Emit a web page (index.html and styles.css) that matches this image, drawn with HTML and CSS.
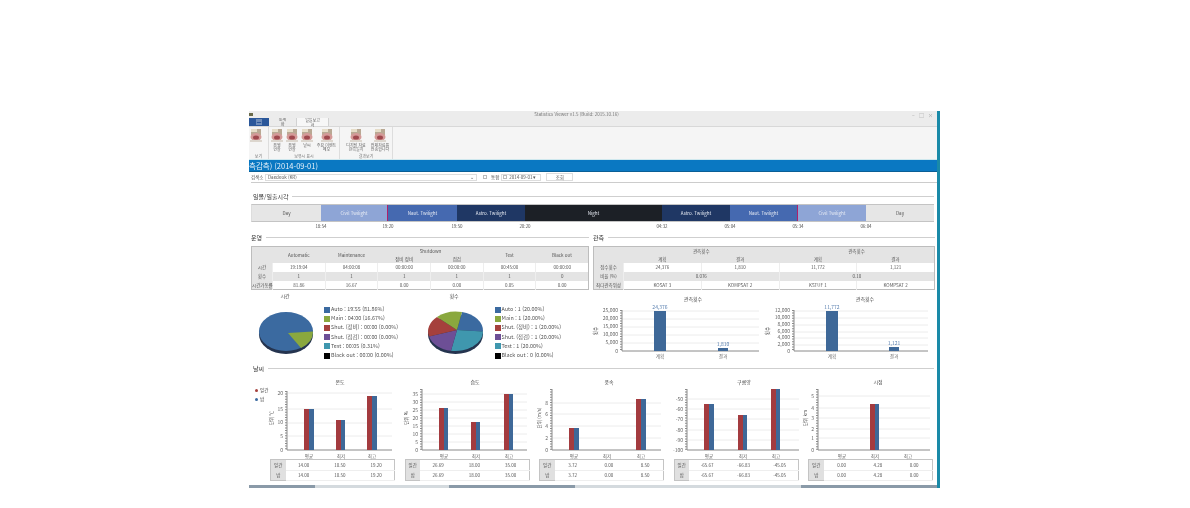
FILE: index.html
```html
<!DOCTYPE html>
<html lang="ko">
<head>
    <meta charset="UTF-8">
    <title>Statistics Viewer</title>
    <link rel="stylesheet" href="styles.css">
</head>
<body>
    <svg class="defs" width="0" height="0">
        <symbol id="ribbonIcon" viewBox="0 0 12 13">
            <rect x="1" y="0" width="10" height="6" fill="#b9a994"/>
            <rect x="1" y="0" width="6" height="3" fill="#e6ddc8"/>
            <ellipse cx="6" cy="8" rx="5.5" ry="4" fill="#d49a98"/>
            <ellipse cx="6" cy="8.5" rx="3" ry="2" fill="#a0484e"/>
            <rect x="0" y="11" width="12" height="2" fill="#dcd6ce"/>
        </symbol>
    </svg>

    <div class="window">
        <div class="titleBar">
            <span class="appIcon"></span>
            <span class="appTitle">Statistics Viewer v1.5 (Build: 2015.10.16)</span>
            <span class="winButtons">&ndash; &#9633; &times;</span>
        </div>
        <div class="tabRow">
            <div class="fileTab">&#9636;</div>
            <div class="tab">통계<br>화</div>
            <div class="tab active">일일보고<br>서</div>
        </div>
        <div class="ribbon">
            <div class="ribbonGroup groupA">
                <div class="ribbonItems">
                    <div class="ribbonItem"><svg class="icon"><use href="#ribbonIcon"/></svg></div>
                </div>
                <div class="groupLabel">보기</div>
            </div>
            <div class="ribbonGroup groupB">
                <div class="ribbonItems">
                    <div class="ribbonItem"><svg class="icon"><use href="#ribbonIcon"/></svg>운영<br>현황</div>
                    <div class="ribbonItem"><svg class="icon"><use href="#ribbonIcon"/></svg>운영<br>현황</div>
                    <div class="ribbonItem"><svg class="icon"><use href="#ribbonIcon"/></svg>날씨</div>
                    <div class="ribbonItem wide"><svg class="icon"><use href="#ribbonIcon"/></svg>주요 이벤트<br>메모</div>
                </div>
                <div class="groupLabel">보유시 표시</div>
            </div>
            <div class="ribbonGroup groupC">
                <div class="ribbonItems">
                    <div class="ribbonItem wide"><svg class="icon"><use href="#ribbonIcon"/></svg>디지털 자료<br>관측일지</div>
                    <div class="ribbonItem wide"><svg class="icon"><use href="#ribbonIcon"/></svg>전체자료를<br>전송합니다</div>
                </div>
                <div class="groupLabel">결과보기</div>
            </div>
        </div>
        <div class="blueBar">측감측) (2014-09-01)</div>

        <div class="content">
            <div class="toolRow">
                <span class="toolLabel">검색소 :</span>
                <div class="comboBox"><span>Daedeok (KR)</span><span>&#8964;</span></div>
                <span class="checkItem"><span class="checkBox"></span>통합</span>
                <div class="dateBox"><span class="checkBox"></span>2014-09-01 &#9662;</div>
                <div class="toolButton">조회</div>
            </div>

            <div class="sectionHead first"><span>일몰/일출시각</span></div>
            <div class="band">
                <div class="seg day">Day</div>
                <div class="seg civil redRight">Civil Twilight</div>
                <div class="seg naut">Naut. Twilight</div>
                <div class="seg astro">Astro. Twilight</div>
                <div class="seg night">Night</div>
                <div class="seg astro">Astro. Twilight</div>
                <div class="seg naut redRight">Naut. Twilight</div>
                <div class="seg civil">Civil Twilight</div>
                <div class="seg day">Day</div>
            </div>
            <div class="band ticks">
                <div></div>
                <div><span>18:54</span></div>
                <div><span>19:20</span></div>
                <div><span>19:50</span></div>
                <div><span>20:20</span></div>
                <div><span>04:32</span></div>
                <div><span>05:04</span></div>
                <div><span>05:34</span></div>
                <div><span>06:04</span></div>
            </div>

            <div class="twoCols">
                <div class="colLeft">
                    <div class="sectionHead"><span>운영</span></div>
                    <table class="dataTable opsTable">
                        <colgroup><col class="opsLabelCol"><col span="6"></colgroup>
                        <tr class="head">
                            <th rowspan="2"></th>
                            <th rowspan="2">Automatic</th>
                            <th rowspan="2">Maintenance</th>
                            <th colspan="2">Shutdown</th>
                            <th rowspan="2">Test</th>
                            <th rowspan="2">Black out</th>
                        </tr>
                        <tr class="head"><th>장비 정비</th><th>점검</th></tr>
                        <tr><th>시간</th><td>19:19:04</td><td>04:00:08</td><td>00:00:00</td><td>00:00:00</td><td>00:45:00</td><td>00:00:00</td></tr>
                        <tr class="grey"><th>횟수</th><td>1</td><td>1</td><td>1</td><td>1</td><td>1</td><td>0</td></tr>
                        <tr><th>시간가동률</th><td>81.86</td><td>16.67</td><td>0.00</td><td>0.00</td><td>0.05</td><td>0.00</td></tr>
                    </table>
                    <div class="pieRow">
                        <svg class="pie pieA" viewBox="0 0 74 70">
                            <text class="chartTitle" x="35" y="5">시간</text>
                            <ellipse cx="36" cy="41.5" rx="27" ry="19.5" fill="#25344f"/>
                            <ellipse cx="36" cy="38.5" rx="27" ry="19.5" fill="#3b6aa0"/>
                            <path d="M38 40 L63 38.5 A27 19.5 0 0 1 51 55 Z" fill="#8aa83e"/>
                        </svg>
                        <ul class="legend">
                            <li><i class="cBlue"></i>Auto : 19:55 (81.86%)</li>
                            <li><i class="cGreen"></i>Main : 04:00 (16.67%)</li>
                            <li><i class="cRed"></i>Shut. (정비) : 00:00 (0.00%)</li>
                            <li><i class="cPurple"></i>Shut. (점검) : 00:00 (0.00%)</li>
                            <li><i class="cTeal"></i>Test : 00:05 (0.31%)</li>
                            <li><i class="cBlack"></i>Black out : 00:00 (0.00%)</li>
                        </ul>
                        <svg class="pie pieB" viewBox="0 0 74 70">
                            <text class="chartTitle" x="35" y="5">횟수</text>
                            <ellipse cx="36.5" cy="41.5" rx="27.5" ry="19.5" fill="#25344f"/>
                            <path d="M38 37 L43 19 A27.5 19.5 0 0 1 64 38.5 Z" fill="#3b6aa0"/>
                            <path d="M38 37 L64 38.5 A27.5 19.5 0 0 1 32 57.7 Z" fill="#3f97ae"/>
                            <path d="M38 37 L32 57.7 A27.5 19.5 0 0 1 10 43.5 Z" fill="#6d4f96"/>
                            <path d="M38 37 L10 43.5 A27.5 19.5 0 0 1 18 24 Z" fill="#a5403c"/>
                            <path d="M38 37 L18 24 A27.5 19.5 0 0 1 43 19 Z" fill="#8aa83e"/>
                        </svg>
                        <ul class="legend">
                            <li><i class="cBlue"></i>Auto : 1 (20.00%)</li>
                            <li><i class="cGreen"></i>Main : 1 (20.00%)</li>
                            <li><i class="cRed"></i>Shut. (정비) : 1 (20.00%)</li>
                            <li><i class="cPurple"></i>Shut. (점검) : 1 (20.00%)</li>
                            <li><i class="cTeal"></i>Test : 1 (20.00%)</li>
                            <li><i class="cBlack"></i>Black out : 0 (0.00%)</li>
                        </ul>
                    </div>
                </div>
                <div class="colRight">
                    <div class="sectionHead"><span>관측</span></div>
                    <table class="dataTable obsTable">
                        <colgroup><col class="obsLabelCol"><col span="4"></colgroup>
                        <tr class="head">
                            <th rowspan="2"></th>
                            <th colspan="2">관측횟수</th>
                            <th colspan="2">관측횟수</th>
                        </tr>
                        <tr class="head"><th>계획</th><th>결과</th><th>계획</th><th>결과</th></tr>
                        <tr><th>접수횟수</th><td>24,376</td><td>1,810</td><td>11,772</td><td>1,121</td></tr>
                        <tr class="grey"><th>비율 (%)</th><td colspan="2">0.076</td><td colspan="2">0.10</td></tr>
                        <tr><th>최다관측위성</th><td>KOSAT 3</td><td>KOMPSAT 2</td><td>KSTUF 1</td><td>KOMPSAT 2</td></tr>
                    </table>
                    <div class="obsCharts">
                        <svg class="obsChart" viewBox="0 0 172 66">
                            <text class="chartTitle" x="100" y="8">관측횟수</text>
                            <path class="grid" d="M29 18H166M29 26H166M29 34H166M29 42H166M29 50H166"/>
                            <path class="tickMarks" d="M28 17V58"/>
                            <path class="axis" d="M29 17V58H166"/>
                            <rect class="barBlue" x="61" y="18" width="12" height="40"/>
                            <rect class="barBlue" x="125" y="55" width="10" height="3"/>
                            <text class="valLbl" x="67" y="16">24,376</text>
                            <text class="valLbl" x="130" y="53">1,810</text>
                            <text class="yLbl" x="25" y="19">25,000</text>
                            <text class="yLbl" x="25" y="27">20,000</text>
                            <text class="yLbl" x="25" y="35">15,000</text>
                            <text class="yLbl" x="25" y="43">10,000</text>
                            <text class="yLbl" x="25" y="51">5,000</text>
                            <text class="yLbl" x="25" y="60">0</text>
                            <text class="yTitle" transform="translate(4 38) rotate(-90)">횟수</text>
                            <text class="xLbl" x="67" y="65">계획</text>
                            <text class="xLbl" x="130" y="65">결과</text>
                        </svg>
                        <svg class="obsChart" viewBox="0 0 172 66">
                            <text class="chartTitle" x="100" y="8">관측횟수</text>
                            <path class="grid" d="M29 18H163M29 25H163M29 32H163M29 39H163M29 45H163M29 52H163"/>
                            <path class="tickMarks" d="M28 17V58"/>
                            <path class="axis" d="M29 17V58H163"/>
                            <rect class="barBlue" x="61" y="18" width="12" height="40"/>
                            <rect class="barBlue" x="124" y="54" width="10" height="4"/>
                            <text class="valLbl" x="67" y="16">11,772</text>
                            <text class="valLbl" x="129" y="52">1,121</text>
                            <text class="yLbl" x="25" y="19">12,000</text>
                            <text class="yLbl" x="25" y="26">10,000</text>
                            <text class="yLbl" x="25" y="33">8,000</text>
                            <text class="yLbl" x="25" y="40">6,000</text>
                            <text class="yLbl" x="25" y="46">4,000</text>
                            <text class="yLbl" x="25" y="53">2,000</text>
                            <text class="yLbl" x="25" y="60">0</text>
                            <text class="yTitle" transform="translate(4 38) rotate(-90)">횟수</text>
                            <text class="xLbl" x="67" y="65">계획</text>
                            <text class="xLbl" x="129" y="65">결과</text>
                        </svg>
                    </div>
                </div>
            </div>

            <div class="sectionHead weatherHead"><span>날씨</span></div>
            <div class="weatherRow">
                <ul class="dayLegend">
                    <li><i class="cRed"></i>일간</li>
                    <li><i class="cBlue"></i>밤</li>
                </ul>

                <div class="weatherCell">
                    <svg class="weatherChart" viewBox="0 0 125 83">
                        <text class="chartTitle" x="70" y="8">온도</text>
                        <path class="grid" d="M18 17H122M18 33H122M18 47H122M18 60H122"/>
                        <path class="tickMarks" d="M16 15V74"/>
                        <path class="axis" d="M17 15V74H122"/>
                        <rect class="barRed" x="34" y="33" width="5" height="41"/><rect class="barBlue" x="39" y="33" width="5" height="41"/>
                        <rect class="barRed" x="66" y="44" width="5" height="30"/><rect class="barBlue" x="71" y="44" width="4" height="30"/>
                        <rect class="barRed" x="97" y="20" width="5" height="54"/><rect class="barBlue" x="102" y="20" width="5" height="54"/>
                        <text class="yLbl" x="13" y="19">20</text><text class="yLbl" x="13" y="35">15</text><text class="yLbl" x="13" y="48">10</text><text class="yLbl" x="13" y="62">5</text><text class="yLbl" x="13" y="76">0</text>
                        <text class="yTitle" transform="translate(3 42) rotate(-90)">단위 ℃</text>
                        <text class="xLbl" x="39" y="82">평균</text><text class="xLbl" x="71" y="82">최저</text><text class="xLbl" x="102" y="82">최고</text>
                    </svg>
                    <table class="weatherTable">
                        <tr><th>일간</th><td>14.00</td><td>10.50</td><td>19.20</td></tr>
                        <tr><th>밤</th><td>14.00</td><td>10.50</td><td>19.20</td></tr>
                    </table>
                </div>

                <div class="weatherCell">
                    <svg class="weatherChart" viewBox="0 0 125 83">
                        <text class="chartTitle" x="70" y="8">습도</text>
                        <path class="grid" d="M18 18H122M18 26H122M18 34H122M18 42H122M18 50H122M18 58H122M18 66H122"/>
                        <path class="tickMarks" d="M16 13V74"/>
                        <path class="axis" d="M17 13V74H122"/>
                        <rect class="barRed" x="34" y="32" width="5" height="42"/><rect class="barBlue" x="39" y="32" width="4" height="42"/>
                        <rect class="barRed" x="66" y="46" width="5" height="28"/><rect class="barBlue" x="71" y="46" width="4" height="28"/>
                        <rect class="barRed" x="99" y="18" width="5" height="56"/><rect class="barBlue" x="104" y="18" width="4" height="56"/>
                        <text class="yLbl" x="13" y="20">35</text><text class="yLbl" x="13" y="28">30</text><text class="yLbl" x="13" y="36">25</text><text class="yLbl" x="13" y="44">20</text><text class="yLbl" x="13" y="52">15</text><text class="yLbl" x="13" y="60">10</text><text class="yLbl" x="13" y="68">5</text><text class="yLbl" x="13" y="76">0</text>
                        <text class="yTitle" transform="translate(3 42) rotate(-90)">단위 %</text>
                        <text class="xLbl" x="39" y="82">평균</text><text class="xLbl" x="71" y="82">최저</text><text class="xLbl" x="104" y="82">최고</text>
                    </svg>
                    <table class="weatherTable">
                        <tr><th>일간</th><td>26.69</td><td>18.00</td><td>35.00</td></tr>
                        <tr><th>밤</th><td>26.69</td><td>18.00</td><td>35.00</td></tr>
                    </table>
                </div>

                <div class="weatherCell">
                    <svg class="weatherChart" viewBox="0 0 125 83">
                        <text class="chartTitle" x="70" y="8">풍속</text>
                        <path class="grid" d="M14 27H122M14 38H122M14 50H122M14 62H122"/>
                        <path class="tickMarks" d="M12 13V74"/>
                        <path class="axis" d="M13 13V74H122"/>
                        <rect class="barRed" x="30" y="52" width="5" height="22"/><rect class="barBlue" x="35" y="52" width="5" height="22"/>
                        <rect class="barRed" x="97" y="23" width="5" height="51"/><rect class="barBlue" x="102" y="23" width="5" height="51"/>
                        <text class="yLbl" x="9" y="29">8</text><text class="yLbl" x="9" y="40">6</text><text class="yLbl" x="9" y="52">4</text><text class="yLbl" x="9" y="64">2</text><text class="yLbl" x="9" y="76">0</text>
                        <text class="yTitle" transform="translate(2 42) rotate(-90)">단위 (m/s)</text>
                        <text class="xLbl" x="35" y="82">평균</text><text class="xLbl" x="68" y="82">최저</text><text class="xLbl" x="102" y="82">최고</text>
                    </svg>
                    <table class="weatherTable">
                        <tr><th>일간</th><td>3.72</td><td>0.00</td><td>8.50</td></tr>
                        <tr><th>밤</th><td>3.72</td><td>0.00</td><td>8.50</td></tr>
                    </table>
                </div>

                <div class="weatherCell">
                    <svg class="weatherChart" viewBox="0 0 125 83">
                        <text class="chartTitle" x="70" y="8">구름양</text>
                        <path class="grid" d="M14 23H125M14 33H125M14 43H125M14 54H125M14 64H125"/>
                        <path class="tickMarks" d="M12 13V74"/>
                        <path class="axis" d="M13 13V74H125"/>
                        <rect class="barRed" x="30" y="28" width="5" height="46"/><rect class="barBlue" x="35" y="28" width="5" height="46"/>
                        <rect class="barRed" x="64" y="39" width="5" height="35"/><rect class="barBlue" x="69" y="39" width="4" height="35"/>
                        <rect class="barRed" x="97" y="13" width="5" height="61"/><rect class="barBlue" x="102" y="13" width="4" height="61"/>
                        <text class="yLbl" x="9" y="25">-50</text><text class="yLbl" x="9" y="35">-60</text><text class="yLbl" x="9" y="45">-70</text><text class="yLbl" x="9" y="56">-80</text><text class="yLbl" x="9" y="66">-90</text><text class="yLbl" x="9" y="76">-100</text>
                        <text class="xLbl" x="35" y="82">평균</text><text class="xLbl" x="69" y="82">최저</text><text class="xLbl" x="102" y="82">최고</text>
                    </svg>
                    <table class="weatherTable">
                        <tr><th>일간</th><td>-65.67</td><td>-66.83</td><td>-45.05</td></tr>
                        <tr><th>밤</th><td>-65.67</td><td>-66.83</td><td>-45.05</td></tr>
                    </table>
                </div>

                <div class="weatherCell">
                    <svg class="weatherChart" viewBox="0 0 125 83">
                        <text class="chartTitle" x="70" y="8">시정</text>
                        <path class="grid" d="M11 20H122M11 32H122M11 42H122M11 53H122M11 62H122"/>
                        <path class="tickMarks" d="M9 13V74"/>
                        <path class="axis" d="M10 13V74H122"/>
                        <rect class="barRed" x="62" y="28" width="5" height="46"/><rect class="barBlue" x="67" y="28" width="4" height="46"/>
                        <text class="yLbl" x="6" y="22">5</text><text class="yLbl" x="6" y="34">4</text><text class="yLbl" x="6" y="44">3</text><text class="yLbl" x="6" y="55">2</text><text class="yLbl" x="6" y="64">1</text><text class="yLbl" x="6" y="76">0</text>
                        <text class="yTitle" transform="translate(-1 42) rotate(-90)">단위 km</text>
                        <text class="xLbl" x="34" y="82">평균</text><text class="xLbl" x="67" y="82">최저</text><text class="xLbl" x="100" y="82">최고</text>
                    </svg>
                    <table class="weatherTable">
                        <tr><th>일간</th><td>0.00</td><td>4.28</td><td>0.00</td></tr>
                        <tr><th>밤</th><td>0.00</td><td>4.28</td><td>0.00</td></tr>
                    </table>
                </div>
            </div>
        </div>

        <div class="taskStrip">
            <div class="stripDark s1"></div>
            <div class="stripLight s2"></div>
            <div class="stripDark s3"></div>
            <div class="stripLight s4"></div>
            <div class="stripDark s5"></div>
        </div>
    </div>
</body>
</html>
```

FILE: styles.css
```css
*{
    box-sizing: border-box;
}

body{
    margin: 0;
    background-color: #ffffff;
    font-family: "Noto Sans CJK KR", "Liberation Sans", sans-serif;
    color: #444444;
}

.defs{
    position: absolute;
}

.window{
    display: flex;
    flex-direction: column;
    width: 691px;
    height: 377px;
    margin: 111px 0 0 249px;
    border-right: 3px solid #1a8aa8;
    background: #ffffff;
    filter: blur(0.45px);
    overflow: hidden;
}

/* title bar and tabs */
.titleBar{
    display: flex;
    justify-content: center;
    position: relative;
    height: 7px;
    padding-right: 33px;
    background: #ececec;
    font-size: 4.5px;
    line-height: 7px;
    color: #777777;
}

.appTitle{
    white-space: nowrap;
}

.appIcon{
    position: absolute;
    left: 0;
    top: 2px;
    width: 4px;
    height: 3px;
    background: #6a6a4a;
}

.winButtons{
    position: absolute;
    right: 4px;
    top: 0;
    font-size: 5px;
    word-spacing: 3px;
    color: #999999;
}

.tabRow{
    display: flex;
    align-items: flex-end;
    height: 9px;
    background: #ececec;
    border-bottom: 1px solid #d8d8d8;
}

.fileTab{
    width: 20px;
    height: 9px;
    background: #2b579a;
    color: #ffffff;
    font-size: 6px;
    line-height: 9px;
    text-align: center;
}

.tab{
    width: 27px;
    height: 9px;
    font-size: 4px;
    line-height: 4.5px;
    text-align: center;
    color: #555555;
}

.tab.active{
    width: 33px;
    background: #f7f7f7;
    border: 1px solid #d2d2d2;
    border-bottom: none;
}

.ribbon{
    display: flex;
    height: 33px;
    background: #f5f5f5;
    border-bottom: 1px solid #cfe8ee;
}

.ribbonGroup{
    display: flex;
    flex-direction: column;
    justify-content: space-between;
    padding-top: 2px;
    border-right: 1px solid #dddddd;
}

.groupA{
    width: 20px;
}

.groupA .ribbonItems{
    padding-right: 6px;
}

.groupB{
    width: 71px;
}

.groupC{
    width: 53px;
}

.groupC .ribbonItems{
    padding-left: 4px;
}

.ribbonItems{
    display: flex;
    justify-content: center;
}

.ribbonItem{
    display: flex;
    flex-direction: column;
    align-items: center;
    width: 15px;
    font-size: 4px;
    line-height: 4.4px;
    text-align: center;
    white-space: nowrap;
    color: #666666;
}

.ribbonItem.wide{
    width: 24px;
}

.icon{
    width: 12px;
    height: 13px;
    margin-bottom: 1px;
}

.groupLabel{
    font-size: 4px;
    line-height: 5px;
    text-align: center;
    color: #777777;
}

.blueBar{
    height: 12px;
    background: #0a78c2;
    border-bottom: 1px solid #0a5f96;
    color: #e8f2fa;
    font-size: 7.5px;
    line-height: 11px;
    white-space: nowrap;
}

/* main area */
.content{
    flex: 1;
    padding: 0 3px 0 2px;
    min-height: 0;
}

.toolRow{
    display: flex;
    align-items: center;
    height: 11px;
    margin-right: -3px;
    border-bottom: 1px solid #cccccc;
    font-size: 4.5px;
    color: #555555;
}

.toolLabel{
    width: 14px;
    white-space: nowrap;
}

.comboBox{
    display: flex;
    justify-content: space-between;
    width: 212px;
    height: 7px;
    padding: 0 2px;
    border: 1px solid #dddddd;
    line-height: 5px;
}

.checkItem{
    display: flex;
    align-items: center;
    gap: 2px;
    margin-left: 6px;
}

.checkBox{
    display: inline-block;
    width: 4px;
    height: 4px;
    border: 1px solid #bbbbbb;
    margin-right: 2px;
}

.dateBox{
    display: flex;
    align-items: center;
    margin-left: 2px;
    width: 40px;
    height: 7px;
    border: 1px solid #dddddd;
    padding-left: 1px;
    white-space: nowrap;
}

.toolButton{
    width: 27px;
    height: 8px;
    margin-left: 5px;
    border: 1px solid #dddddd;
    line-height: 6px;
    text-align: center;
}

.sectionHead{
    display: flex;
    align-items: center;
    gap: 4px;
    height: 10px;
    font-size: 6px;
    color: #333333;
    white-space: nowrap;
}

.sectionHead::after{
    content: "";
    flex: 1;
    height: 1px;
    background: #cfcfcf;
}

.sectionHead.first{
    margin: 8px 0 3px;
    padding-left: 2px;
}

/* twilight band */
.band{
    display: grid;
    grid-template-columns: 69px 67px 69px 68px 137px 68px 68px 68px 68px;
    height: 18px;
    border: 1px solid #c4c4c4;
    border-left: 1px solid #dddddd;
    font-size: 4.5px;
}

.seg{
    display: flex;
    align-items: center;
    justify-content: center;
    color: #e8ecf4;
}

.day{
    background: #e6e6e6;
    color: #555555;
}

.civil{
    background: #8ea5d6;
}

.naut{
    background: #4569b0;
}

.astro{
    background: #1f3764;
}

.night{
    background: #1c2026;
}

.redRight{
    border-right: 1px solid #b0206a;
}

.ticks{
    height: 10px;
    border: none;
    padding-left: 1px;
    font-size: 4.5px;
    line-height: 8px;
    color: #555555;
}

.ticks span{
    display: inline-block;
    transform: translateX(-50%);
}

/* operation and observation */
.twoCols{
    display: flex;
    gap: 4px;
}

.colLeft{
    width: 338px;
}

.colRight{
    width: 342px;
}

.dataTable{
    width: 100%;
    height: 43px;
    margin-top: 4px;
    border-collapse: collapse;
    border: 1px solid #bdbdbd;
    table-layout: fixed;
    font-size: 4.5px;
    text-align: center;
    color: #555555;
}

.dataTable th{
    padding: 0;
    font-weight: normal;
    background: #e4e4e4;
    white-space: nowrap;
}

.dataTable td{
    padding: 0;
    border-left: 1px solid #eeeeee;
}

.dataTable tr{
    height: 9px;
}

.dataTable .head{
    height: 8px;
}

.dataTable .grey td{
    background: #e4e4e4;
}

.opsLabelCol{
    width: 21px;
}

.obsLabelCol{
    width: 30px;
}

.pieRow{
    display: flex;
    height: 70px;
    margin-top: 3px;
}

.pie{
    width: 74px;
    height: 70px;
    flex-shrink: 0;
}

.pieA{
    margin-left: -1px;
}

.pieB{
    margin-right: 2px;
}

.legend{
    width: 96px;
    margin: 12px 0 0;
    padding: 0;
    list-style: none;
    font-size: 5.4px;
    line-height: 9.2px;
    color: #555555;
    white-space: nowrap;
}

.legend li{
    display: flex;
    align-items: center;
    gap: 1px;
}

.legend i{
    width: 6px;
    height: 6px;
}

.cBlue{
    background: #3b6aa0;
}

.cGreen{
    background: #8aa83e;
}

.cRed{
    background: #a5403c;
}

.cPurple{
    background: #6d4f96;
}

.cTeal{
    background: #3f97ae;
}

.cBlack{
    background: #000000;
}

.obsCharts{
    display: flex;
    justify-content: space-between;
    margin-top: 3px;
}

.obsChart{
    width: 172px;
    height: 66px;
    overflow: visible;
}

.weatherHead{
    height: 10px;
    padding-left: 2px;
}

/* weather charts */
.weatherRow{
    display: flex;
    gap: 9.5px;
    margin-top: 3px;
}

.dayLegend{
    flex: 0 0 5.5px;
    min-width: 0;
    margin: 10px 0 0 4px;
    padding: 0;
    list-style: none;
    font-size: 4.5px;
    line-height: 9px;
    white-space: nowrap;
}

.dayLegend li{
    display: flex;
    align-items: center;
    gap: 2px;
    width: 16px;
}

.dayLegend i{
    flex: 0 0 3px;
    height: 3px;
    border-radius: 50%;
}

.weatherCell{
    width: 125px;
    flex-shrink: 0;
}

.weatherChart{
    display: block;
    width: 125px;
    height: 83px;
    overflow: visible;
}

.weatherTable{
    width: 125px;
    height: 22px;
    border-collapse: collapse;
    border: 1px solid #c4c4c4;
    table-layout: fixed;
    font-size: 4.5px;
    text-align: center;
    color: #555555;
}

.weatherTable th{
    width: 15px;
    padding: 0;
    font-weight: normal;
    background: #e0e0e0;
}

.weatherTable td{
    padding: 0;
    border-bottom: 1px solid #eeeeee;
}

/* svg chart parts */
text{
    font-family: "Noto Sans CJK KR", "Liberation Sans", sans-serif;
}

.chartTitle{
    font-size: 5px;
    fill: #444444;
    text-anchor: middle;
}

.grid{
    stroke: #ececec;
    stroke-width: 1;
    fill: none;
}

.axis{
    stroke: #8a8a8a;
    stroke-width: 1;
    fill: none;
}

.tickMarks{
    stroke: #8a8a8a;
    stroke-width: 2;
    stroke-dasharray: 1 1.6;
    fill: none;
}

.barRed{
    fill: #a33b3f;
}

.barBlue{
    fill: #3e6898;
}

.yLbl{
    font-size: 5px;
    fill: #666666;
    text-anchor: end;
}

.xLbl{
    font-size: 4.5px;
    fill: #666666;
    text-anchor: middle;
}

.valLbl{
    font-size: 5px;
    fill: #5a80b0;
    text-anchor: middle;
}

.yTitle{
    font-size: 4.5px;
    fill: #444444;
    text-anchor: middle;
}

/* bottom strip */
.taskStrip{
    display: flex;
    height: 3px;
    flex-shrink: 0;
}

.stripDark{
    background: #8a9aa8;
}

.stripLight{
    background: #d4dade;
}

.s1{
    width: 66px;
}

.s2{
    width: 134px;
}

.s3{
    width: 126px;
}

.s4{
    width: 226px;
}

.s5{
    flex: 1;
}
```
